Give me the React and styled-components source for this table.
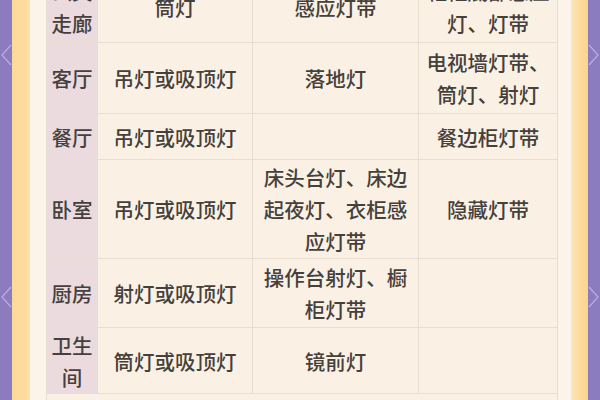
import React from 'react'
import styled, { createGlobalStyle } from 'styled-components'

const GlobalStyle = createGlobalStyle`
  html, body {
    margin: 0;
    padding: 0;
    background: #fbf2e6;
  }
  body {
    font-family: "Noto Sans CJK SC", "Noto Sans", sans-serif;
  }
`

const Page = styled.div`
  display: flex;
  width: 600px;
  height: 400px;
  overflow: hidden;
`

const Edge = styled.div`
  flex: 0 0 ${props => props.width}px;
  display: flex;
  flex-direction: column;
  align-items: ${props => (props.side === 'left' ? 'flex-start' : 'flex-end')};
  background: #8b7cbf;
  svg {
    display: block;
  }
  .first {
    margin-top: 44px;
  }
  .second {
    margin-top: 220px;
  }
`

const Stripe = styled.div`
  flex: 0 0 ${props => props.width}px;
  background: ${props =>
    props.side === 'left'
      ? 'linear-gradient(90deg, #fbd998 0%, #fcdc9f 80%, #fde4b6 100%)'
      : 'linear-gradient(90deg, #fde6bc 0%, #fcd99a 60%, #fbd38e 100%)'};
`

const Card = styled.div`
  flex: 1;
  padding: 0 16px;
  background: #fcf4e9;
  overflow: hidden;
`

const Table = styled.table`
  width: 511px;
  table-layout: fixed;
  border-collapse: collapse;
  margin-top: -29px;
  color: #46403c;
  font-size: 20.5px;
  font-weight: 500;
  line-height: 32px;
  text-align: center;
`

const Row = styled.tr`
  height: ${props => props.h}px;
`

const Cell = styled.td`
  padding: 0 6px;
  vertical-align: middle;
  border: 1px solid #e9ddd0;
  background: #faf1e4;
  word-break: break-all;
`

const Room = styled(Cell)`
  padding: 0 4px;
  background: #ebdbdf;
  color: #45403e;
`

const Chevron = ({ dir, className }) => (
  <svg className={className} width='12' height='22' viewBox='0 0 12 22'>
    <path
      d={dir === 'left' ? 'M11 1 L2 11 L11 21' : 'M1 1 L10 11 L1 21'}
      fill='none'
      stroke='#b8aee0'
      strokeWidth='1.2'
    />
  </svg>
)

const rows = [
  { room: '玄关走廊', main: '筒灯', aux: '感应灯带', accent: '鞋柜底部感应灯、灯带', h: 71 },
  { room: '客厅', main: '吊灯或吸顶灯', aux: '落地灯', accent: '电视墙灯带、筒灯、射灯', h: 71 },
  { room: '餐厅', main: '吊灯或吸顶灯', aux: '', accent: '餐边柜灯带', h: 46 },
  { room: '卧室', main: '吊灯或吸顶灯', aux: '床头台灯、床边起夜灯、衣柜感应灯带', accent: '隐藏灯带', h: 99 },
  { room: '厨房', main: '射灯或吸顶灯', aux: '操作台射灯、橱柜灯带', accent: '', h: 69 },
  { room: '卫生间', main: '筒灯或吸顶灯', aux: '镜前灯', accent: '', h: 66 }
]

const App = () => (
  <>
    <GlobalStyle />
    <Page>
      <Edge width={12} side='left'>
        <Chevron dir='left' className='first' />
        <Chevron dir='left' className='second' />
      </Edge>
      <Stripe width={18} side='left' />
      <Card>
        <Table>
          <colgroup>
            <col style={{ width: 51 }} />
            <col style={{ width: 155 }} />
            <col style={{ width: 166 }} />
            <col style={{ width: 139 }} />
          </colgroup>
          <tbody>
            {rows.map(r => (
              <Row key={r.room} h={r.h}>
                <Room>{r.room}</Room>
                <Cell>{r.main}</Cell>
                <Cell>{r.aux}</Cell>
                <Cell>{r.accent}</Cell>
              </Row>
            ))}
            <Row h={40}>
              <Cell colSpan={4} />
            </Row>
          </tbody>
        </Table>
      </Card>
      <Stripe width={17} side='right' />
      <Edge width={10} side='right'>
        <Chevron dir='right' className='first' />
        <Chevron dir='right' className='second' />
      </Edge>
    </Page>
  </>
)

export default App
